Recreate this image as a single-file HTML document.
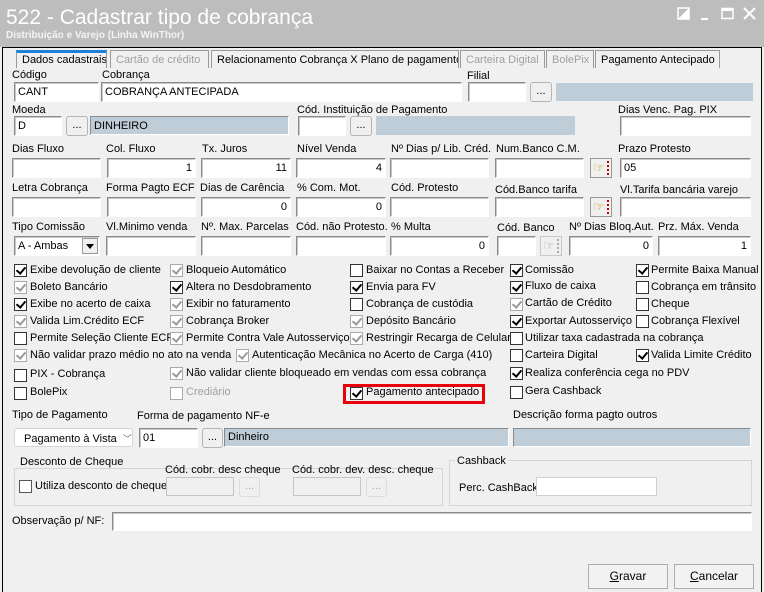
<!DOCTYPE html>
<html><head><meta charset="utf-8">
<style>
*{box-sizing:border-box;margin:0;padding:0}
body{width:764px;height:592px;background:#f0f0f0;font-family:"Liberation Sans",sans-serif;font-size:11px;color:#000;position:relative;overflow:hidden}
.a{position:absolute;white-space:nowrap}
.tb{position:absolute;left:0;top:0;width:764px;height:47px;background:#bdbdbd}
.i{position:absolute;background:#fff;border:1px solid;border-color:#8a8a8a #fff #fff #8a8a8a;box-shadow:inset 1px 1px #c8c8c8;height:20px;padding:3px 3px;line-height:13px;white-space:nowrap;font-size:11px}
.r{text-align:right}
.ro{background:#bfcdd9;border-color:#bfcdd9;box-shadow:none}
.ro2{background:#bfcdd9;border-color:#8a8a8a #fff #fff #8a8a8a;box-shadow:none}
.b{position:absolute;background:#f0f0f0;border:1px solid #b5b5b5;border-radius:3px;height:20px;text-align:center;line-height:16px;font-size:11px;color:#000}
.cb{position:absolute;width:13px;height:13px;border:1px solid #333;background:#fff}
.cb.g{border-color:#aaa}
.ck::after{content:"";position:absolute;left:3px;top:0px;width:4px;height:7px;border:solid #000;border-width:0 2px 2px 0;transform:rotate(40deg)}
.g.ck::after{border-color:#9a9a9a}
.tab{position:absolute;top:50px;height:18px;border:1px solid #9a9a9a;border-bottom:none;background:#f0f0f0;padding:2px 0 0 5px;font-size:11px;line-height:14px;white-space:nowrap;overflow:hidden}
.dis{color:#a0a0a0}
.grp{position:absolute;border:1px solid #d5d5d5}
.hand{position:absolute;width:22px;height:20px;border:1px solid #999;background:#f0f0f0}
</style></head><body>
<div class="tb"></div>
<div class="a" style="left:6px;top:6px;font-size:21px;color:#fff">522 - Cadastrar tipo de cobrança</div>
<div class="a" style="left:6px;top:30px;font-size:10px;font-weight:bold;color:#f4f4f4">Distribuição e Varejo (Linha WinThor)</div>
<svg class="a" style="left:676px;top:6px" width="84" height="16">
<path d="M2 2h11v11H2z" fill="none" stroke="#fff" stroke-width="1.5"/><path d="M2 13L13 2V13Z" fill="#fff"/>
<path d="M25 13h7" stroke="#fff" stroke-width="2"/>
<rect x="46" y="2.5" width="11" height="10" fill="none" stroke="#fff" stroke-width="1.5"/><path d="M46 4h11" stroke="#fff" stroke-width="2"/>
<path d="M68 2l11 11M79 2L68 13" stroke="#fff" stroke-width="2"/>
</svg>
<div class="a" style="left:2px;top:47px;width:760px;height:545px;border:1px solid #000;border-bottom:none;background:#f0f0f0"></div>
<div class="tab" style="left:16px;width:91px;top:50px;border-top:3px solid #1e80d8;border-color:#1e80d8 #9a9a9a #9a9a9a #9a9a9a;padding-top:0">Dados cadastrais</div>
<div class="tab dis" style="left:110px;width:99px">Cartão de crédito</div>
<div class="tab" style="left:211px;width:248px">Relacionamento Cobrança X Plano de pagamento</div>
<div class="tab dis" style="left:460px;width:85px">Carteira Digital</div>
<div class="tab dis" style="left:546px;width:48px">BolePix</div>
<div class="tab" style="left:595px;width:125px">Pagamento Antecipado</div>

<div class="a" style="left:12px;top:69px">Código</div>
<div class="a" style="left:102px;top:69px">Cobrança</div>
<div class="a" style="left:467px;top:70px">Filial</div>
<div class="i" style="left:14px;top:82px;width:85px">CANT</div>
<div class="i" style="left:101px;top:82px;width:361px">COBRANÇA ANTECIPADA</div>
<div class="i" style="left:468px;top:82px;width:58px"></div>
<div class="b" style="left:530px;top:82px;width:22px">...</div>
<div class="i ro" style="left:556px;top:83px;width:197px;height:18px"></div>

<div class="a" style="left:12px;top:104px">Moeda</div>
<div class="a" style="left:297px;top:104px">Cód. Instituição de Pagamento</div>
<div class="a" style="left:618px;top:104px">Dias Venc. Pag. PIX</div>
<div class="i" style="left:14px;top:116px;width:48px">D</div>
<div class="b" style="left:66px;top:116px;width:22px">...</div>
<div class="i ro2" style="left:90px;top:116px;width:199px;height:19px">DINHEIRO</div>
<div class="i" style="left:298px;top:116px;width:48px"></div>
<div class="b" style="left:350px;top:116px;width:22px">...</div>
<div class="i ro" style="left:376px;top:116px;width:199px;height:19px"></div>
<div class="i" style="left:620px;top:116px;width:131px"></div>

<div class="a" style="left:12px;top:143px">Dias Fluxo</div>
<div class="a" style="left:106px;top:143px">Col. Fluxo</div>
<div class="a" style="left:202px;top:143px">Tx. Juros</div>
<div class="a" style="left:297px;top:143px">Nível Venda</div>
<div class="a" style="left:391px;top:143px">Nº Dias p/ Lib. Créd.</div>
<div class="a" style="left:496px;top:143px">Num.Banco C.M.</div>
<div class="a" style="left:618px;top:143px">Prazo Protesto</div>
<div class="i" style="left:12px;top:158px;width:89px"></div>
<div class="i r" style="left:107px;top:158px;width:89px">1</div>
<div class="i r" style="left:201px;top:158px;width:90px">11</div>
<div class="i r" style="left:296px;top:158px;width:90px">4</div>
<div class="i" style="left:390px;top:158px;width:99px"></div>
<div class="i" style="left:495px;top:158px;width:89px"></div>
<div class="hand" style="left:590px;top:158px"><span class="a" style="left:2px;top:1px;font-size:13px;color:#b8a000">☞</span><span class="a" style="left:16px;top:2px;width:2px;height:14px;border-left:2px dotted #c00"></span></div>
<div class="i" style="left:620px;top:158px;width:131px">05</div>

<div class="a" style="left:12px;top:182px">Letra Cobrança</div>
<div class="a" style="left:106px;top:182px">Forma Pagto ECF</div>
<div class="a" style="left:200px;top:182px">Dias de Carência</div>
<div class="a" style="left:297px;top:182px">% Com. Mot.</div>
<div class="a" style="left:391px;top:182px">Cód. Protesto</div>
<div class="a" style="left:495px;top:184px">Cód.Banco tarifa</div>
<div class="a" style="left:620px;top:184px">Vl.Tarifa bancária varejo</div>
<div class="i" style="left:12px;top:197px;width:89px"></div>
<div class="i" style="left:107px;top:197px;width:89px"></div>
<div class="i r" style="left:201px;top:197px;width:90px">0</div>
<div class="i r" style="left:296px;top:197px;width:90px">0</div>
<div class="i" style="left:390px;top:197px;width:99px"></div>
<div class="i" style="left:495px;top:197px;width:89px"></div>
<div class="hand" style="left:590px;top:197px"><span class="a" style="left:2px;top:1px;font-size:13px;color:#b8a000">☞</span><span class="a" style="left:16px;top:2px;width:2px;height:14px;border-left:2px dotted #c00"></span></div>
<div class="i" style="left:620px;top:197px;width:131px"></div>

<div class="a" style="left:12px;top:221px">Tipo Comissão</div>
<div class="a" style="left:106px;top:221px">Vl.Minimo venda</div>
<div class="a" style="left:201px;top:221px">Nº. Max. Parcelas</div>
<div class="a" style="left:296px;top:221px">Cód. não Protesto.</div>
<div class="a" style="left:391px;top:221px">% Multa</div>
<div class="a" style="left:497px;top:222px">Cód. Banco</div>
<div class="a" style="left:569px;top:221px">Nº Dias Bloq.Aut.</div>
<div class="a" style="left:658px;top:221px">Prz. Máx. Venda</div>
<div class="i" style="left:14px;top:236px;width:86px">A - Ambas</div>
<div class="a" style="left:82px;top:238px;width:16px;height:16px;background:#f0f0f0;border:1px solid #999"><span class="a" style="left:3px;top:5px;border:4px solid transparent;border-top:5px solid #000"></span></div>
<div class="i" style="left:106px;top:236px;width:90px"></div>
<div class="i" style="left:201px;top:236px;width:90px"></div>
<div class="i" style="left:296px;top:236px;width:90px"></div>
<div class="i r" style="left:390px;top:236px;width:99px">0</div>
<div class="i" style="left:497px;top:236px;width:39px"></div>
<div class="hand" style="left:540px;top:236px;border-color:#c8c8c8"><span class="a" style="left:2px;top:1px;font-size:13px;color:#aaa">☞</span><span class="a" style="left:16px;top:2px;height:14px;border-left:2px dotted #aaa"></span></div>
<div class="i r" style="left:569px;top:236px;width:84px">0</div>
<div class="i r" style="left:658px;top:236px;width:93px">1</div>

<div class="cb ck" style="left:14px;top:264px"></div><div class="a" style="left:30px;top:264px">Exibe devolução de cliente</div>
<div class="cb g ck" style="left:170px;top:264px"></div><div class="a" style="left:186px;top:264px">Bloqueio Automático</div>
<div class="cb" style="left:350px;top:264px"></div><div class="a" style="left:366px;top:264px">Baixar no Contas a Receber</div>
<div class="cb ck" style="left:510px;top:264px"></div><div class="a" style="left:525px;top:264px">Comissão</div>
<div class="cb ck" style="left:636px;top:264px"></div><div class="a" style="left:651px;top:264px">Permite Baixa Manual</div>

<div class="cb g ck" style="left:14px;top:281px"></div><div class="a" style="left:30px;top:281px">Boleto Bancário</div>
<div class="cb ck" style="left:170px;top:281px"></div><div class="a" style="left:186px;top:281px">Altera no Desdobramento</div>
<div class="cb ck" style="left:350px;top:281px"></div><div class="a" style="left:366px;top:281px">Envia para FV</div>
<div class="cb ck" style="left:510px;top:281px"></div><div class="a" style="left:525px;top:280px">Fluxo de caixa</div>
<div class="cb" style="left:636px;top:281px"></div><div class="a" style="left:651px;top:281px">Cobrança em trânsito</div>

<div class="cb ck" style="left:14px;top:298px"></div><div class="a" style="left:30px;top:298px">Exibe no acerto de caixa</div>
<div class="cb g ck" style="left:170px;top:298px"></div><div class="a" style="left:186px;top:298px">Exibir no faturamento</div>
<div class="cb" style="left:350px;top:298px"></div><div class="a" style="left:366px;top:298px">Cobrança de custódia</div>
<div class="cb g ck" style="left:510px;top:298px"></div><div class="a" style="left:525px;top:297px">Cartão de Crédito</div>
<div class="cb" style="left:636px;top:298px"></div><div class="a" style="left:651px;top:298px">Cheque</div>

<div class="cb g ck" style="left:14px;top:315px"></div><div class="a" style="left:30px;top:315px">Valida Lim.Crédito ECF</div>
<div class="cb g ck" style="left:170px;top:315px"></div><div class="a" style="left:186px;top:315px">Cobrança Broker</div>
<div class="cb g ck" style="left:350px;top:315px"></div><div class="a" style="left:366px;top:315px">Depósito Bancário</div>
<div class="cb ck" style="left:510px;top:315px"></div><div class="a" style="left:525px;top:315px">Exportar Autosserviço</div>
<div class="cb" style="left:636px;top:315px"></div><div class="a" style="left:651px;top:315px">Cobrança Flexível</div>

<div class="cb" style="left:14px;top:332px"></div><div class="a" style="left:30px;top:332px">Permite Seleção Cliente ECF</div>
<div class="cb g ck" style="left:170px;top:332px"></div><div class="a" style="left:186px;top:332px">Permite Contra Vale Autosserviço</div>
<div class="cb g ck" style="left:350px;top:332px"></div><div class="a" style="left:366px;top:332px">Restringir Recarga de Celular</div>
<div class="cb" style="left:510px;top:332px"></div><div class="a" style="left:525px;top:332px">Utilizar taxa cadastrada na cobrança</div>

<div class="cb g ck" style="left:14px;top:349px"></div><div class="a" style="left:30px;top:349px">Não validar prazo médio no ato na venda</div>
<div class="cb g ck" style="left:236px;top:349px"></div><div class="a" style="left:252px;top:349px">Autenticação Mecânica no Acerto de Carga (410)</div>
<div class="cb" style="left:510px;top:349px"></div><div class="a" style="left:525px;top:349px">Carteira Digital</div>
<div class="cb ck" style="left:636px;top:349px"></div><div class="a" style="left:651px;top:349px">Valida Limite Crédito</div>

<div class="cb" style="left:14px;top:369px"></div><div class="a" style="left:30px;top:368px">PIX - Cobrança</div>
<div class="cb g ck" style="left:170px;top:367px"></div><div class="a" style="left:186px;top:367px">Não validar cliente bloqueado em vendas com essa cobrança</div>
<div class="cb ck" style="left:510px;top:367px"></div><div class="a" style="left:525px;top:367px">Realiza conferência cega no PDV</div>

<div class="cb" style="left:14px;top:387px"></div><div class="a" style="left:30px;top:386px">BolePix</div>
<div class="cb g" style="left:170px;top:387px"></div><div class="a dis" style="left:186px;top:386px">Crediário</div>
<div class="a" style="left:343px;top:384px;width:142px;height:20px;border:3px solid #e8000b"></div>
<div class="cb ck" style="left:350px;top:387px"></div><div class="a" style="left:366px;top:386px">Pagamento antecipado</div>
<div class="cb" style="left:510px;top:386px"></div><div class="a" style="left:525px;top:385px">Gera Cashback</div>

<div class="a" style="left:12px;top:409px">Tipo de Pagamento</div>
<div class="a" style="left:137px;top:410px">Forma de pagamento NF-e</div>
<div class="a" style="left:513px;top:409px">Descrição forma pagto outros</div>
<div class="a" style="left:14px;top:428px;width:119px;height:19px;background:#fff;border:1px solid #d5d5d5;border-radius:3px;padding:3px 0 0 9px">Pagamento à Vista <span style="color:#666;font-size:9px;margin-left:3px">﹀</span></div>
<div class="i" style="left:139px;top:428px;width:59px">01</div>
<div class="b" style="left:202px;top:428px;width:21px">...</div>
<div class="i ro2" style="left:224px;top:428px;width:285px;height:19px;padding-top:2px">Dinheiro</div>
<div class="i ro2" style="left:513px;top:428px;width:238px;height:19px"></div>

<div class="grp" style="left:14px;top:468px;width:429px;height:38px"></div>
<div class="a" style="left:18px;top:456px;background:#f0f0f0;padding:0 2px">Desconto de Cheque</div>
<div class="cb" style="left:19px;top:480px;border-color:#555"></div><div class="a" style="left:35px;top:480px">Utiliza desconto de cheque</div>
<div class="a" style="left:165px;top:464px">Cód. cobr. desc cheque</div>
<div class="a" style="left:292px;top:464px">Cód. cobr. dev. desc. cheque</div>
<div class="a" style="left:166px;top:477px;width:68px;height:19px;background:#f0f0f0;border:1px solid #c5c5c5"></div>
<div class="b" style="left:239px;top:477px;width:21px;border-color:#ddd;color:#aaa">...</div>
<div class="a" style="left:293px;top:477px;width:68px;height:19px;background:#f0f0f0;border:1px solid #c5c5c5"></div>
<div class="b" style="left:366px;top:477px;width:21px;border-color:#ddd;color:#aaa">...</div>

<div class="grp" style="left:449px;top:460px;width:303px;height:46px"></div>
<div class="a" style="left:455px;top:455px;background:#f0f0f0;padding:0 2px">Cashback</div>
<div class="a" style="left:459px;top:482px">Perc. CashBack</div>
<div class="a" style="left:536px;top:477px;width:121px;height:19px;background:#fff;border:1px solid #d0d0d0"></div>

<div class="a" style="left:12px;top:515px">Observação p/ NF:</div>
<div class="i" style="left:112px;top:512px;width:640px;height:19px"></div>

<div class="b" style="left:588px;top:564px;width:80px;height:25px;border-radius:0;border-color:#adadad;background:#f2f2f2;line-height:22px;font-size:12px"><u>G</u>ravar</div>
<div class="b" style="left:674px;top:564px;width:80px;height:25px;border-radius:0;border-color:#adadad;background:#f2f2f2;line-height:22px;font-size:12px"><u>C</u>ancelar</div>
</body></html>
